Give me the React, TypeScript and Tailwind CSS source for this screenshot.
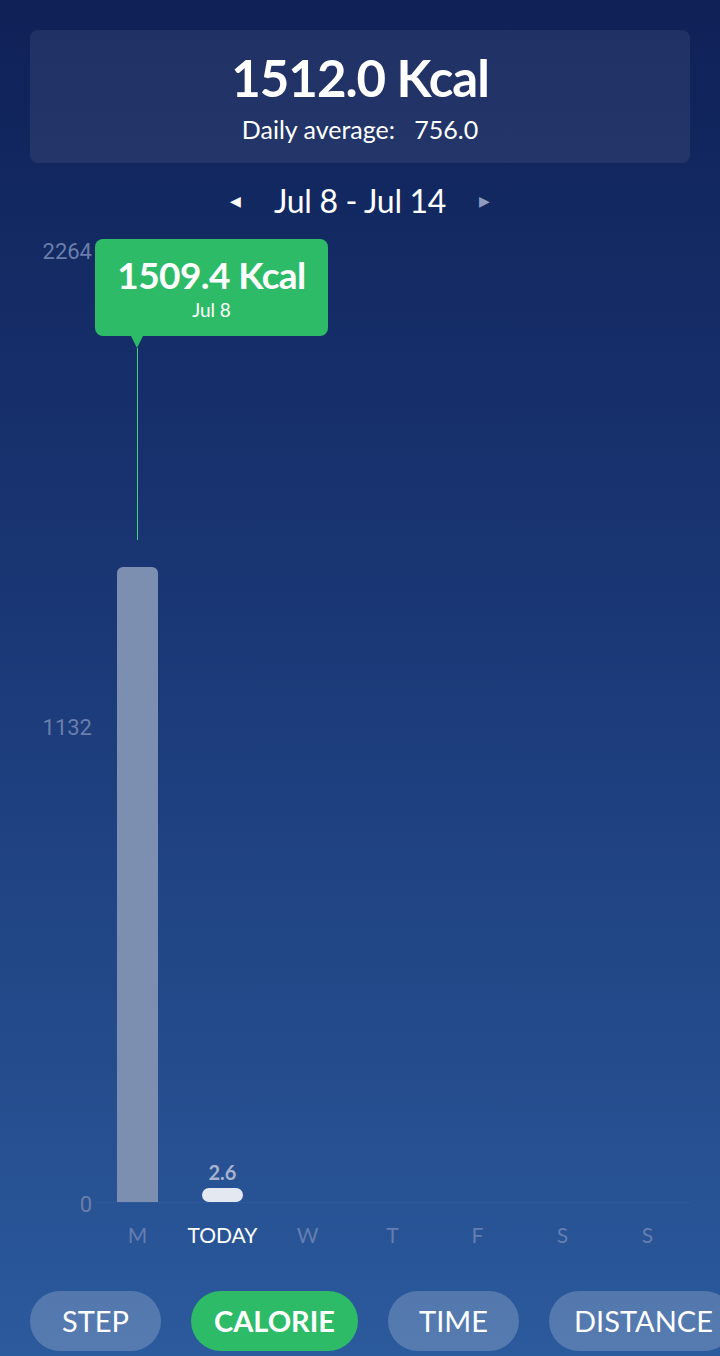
import React from 'react';

const days = [
  { label: 'M', value: 1509.4 },
  { label: 'TODAY', value: 2.6, today: true },
  { label: 'W', value: 0 },
  { label: 'T', value: 0 },
  { label: 'F', value: 0 },
  { label: 'S', value: 0 },
  { label: 'S', value: 0 },
];

const MAX = 2264;
const CHART_H = 951;

export default function App() {
  return (
    <div className="relative h-[1356px] w-[720px] overflow-hidden bg-[linear-gradient(180deg,#0f2157_0%,#1a3775_45%,#2b5a9d_100%)] font-['Lato','Open_Sans',sans-serif] text-white">
      <div className="px-[30px] pt-[30px]">
        <div className="flex h-[133px] flex-col items-center justify-center rounded-[8px] bg-white/[0.07]">
          <div className="text-[51px] font-bold leading-none tracking-[-1px]">1512.0 Kcal</div>
          <div className="mt-[14px] text-[25px] leading-none">Daily average:&nbsp;&nbsp; 756.0</div>
        </div>
      </div>

      <div className="flex h-[76px] items-center justify-center">
        <span className="mr-[33px] text-[14px] leading-none text-white">◀</span>
        <span className="text-[32px] leading-none tracking-[-0.3px]">Jul 8 - Jul 14</span>
        <span className="ml-[33px] text-[14px] leading-none text-[#8f9cc0]">▶</span>
      </div>

      <div className="relative mt-[13px] flex h-[951px]">
        <div className="relative w-[95px] font-['Roboto',sans-serif] text-[22px] leading-none text-[#6b7eab]">
          <span className="absolute right-[3px] top-0 -translate-y-1/2">2264</span>
          <span className="absolute right-[3px] top-1/2 -translate-y-1/2">1132</span>
          <span className="absolute bottom-0 right-[3px] translate-y-[60%]">0</span>
        </div>
        <div className="grid w-[595px] grid-cols-7 items-end border-b border-white/[0.04]">
          {days.map((d, i) => (
            <div key={i} className="flex flex-col items-center justify-end">
              {d.today && (
                <>
                  <div className="mb-[6px] text-[20px] font-bold leading-none text-[#a7b3cf]">{d.value}</div>
                  <div className="h-[14px] w-[41px] rounded-full bg-[#e4e8f0]" />
                </>
              )}
              {!d.today && d.value > 0 && (
                <div
                  className="w-[41px] rounded-t-[6px] bg-[#7d8fb0]"
                  style={{ height: Math.round((d.value / MAX) * CHART_H) + 1 }}
                />
              )}
            </div>
          ))}
        </div>

        <div className="absolute left-[95px] top-[-13px] flex h-[97px] w-[233px] flex-col items-center justify-center rounded-[8px] bg-[#2dbb67]">
          <div className="text-[37px] font-bold leading-none tracking-[-0.6px]">1509.4 Kcal</div>
          <div className="mt-[7px] text-[19px] leading-none">Jul 8</div>
          <div className="absolute left-[36px] top-full h-0 w-0 border-x-[6px] border-t-[12px] border-x-transparent border-t-[#2dbb67]" />
        </div>
        <div className="absolute left-[137px] top-[96px] h-[192px] w-px bg-[#3ad483]" />
      </div>

      <div className="ml-[95px] mt-[21px] grid w-[595px] grid-cols-7 text-[21px] leading-none">
        {days.map((d, i) => (
          <div key={i} className={d.today ? 'text-center text-white' : 'text-center text-[#667db0]'}>
            {d.label}
          </div>
        ))}
      </div>

      <div className="mt-[46px] flex gap-[30px] pl-[30px]">
        <div className="flex h-[60px] w-[131px] shrink-0 items-center justify-center rounded-full bg-white/[0.2] text-[29px]">STEP</div>
        <div className="flex h-[60px] w-[167px] shrink-0 items-center justify-center rounded-full bg-[#2dbb67] text-[29px] font-bold">CALORIE</div>
        <div className="flex h-[60px] w-[131px] shrink-0 items-center justify-center rounded-full bg-white/[0.2] text-[29px]">TIME</div>
        <div className="flex h-[60px] w-[185px] shrink-0 items-center justify-start rounded-full bg-white/[0.2] pl-[25px] text-[29px]">DISTANCE</div>
      </div>
    </div>
  );
}
